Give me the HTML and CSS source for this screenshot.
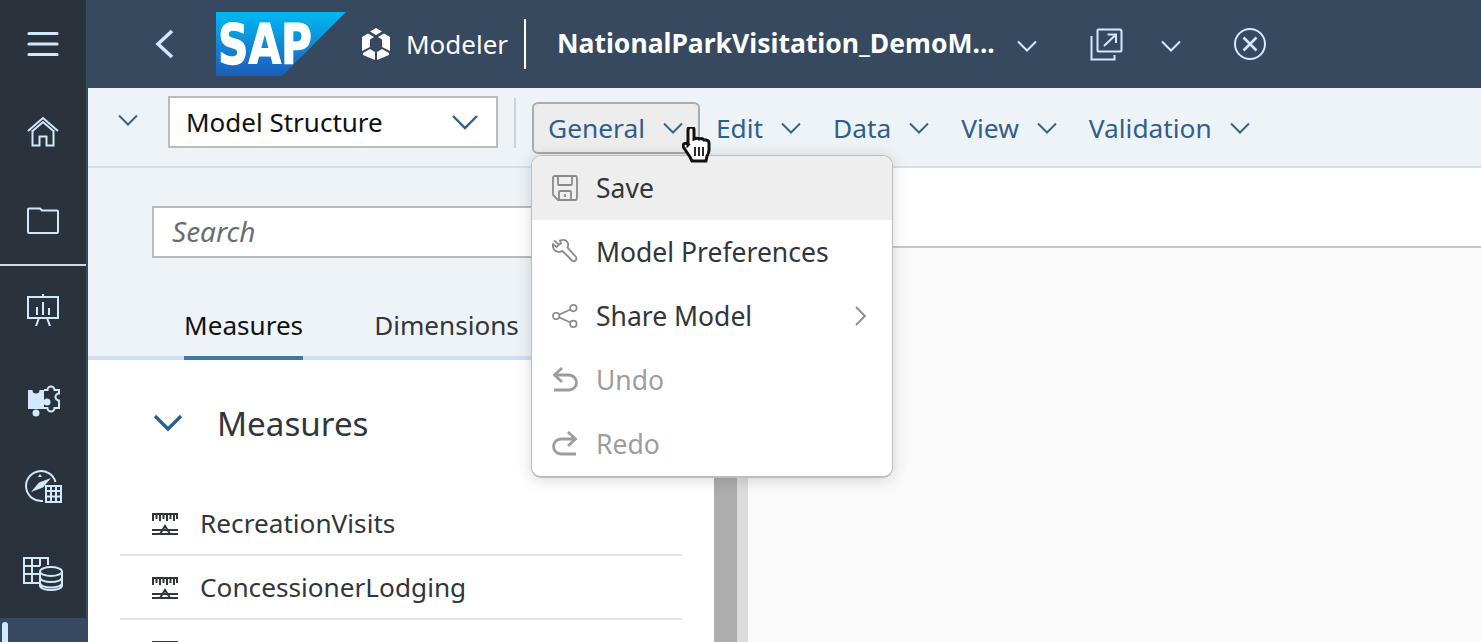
FILE: index.html
```html
<!DOCTYPE html>
<html lang="en">
<head>
    <meta charset="UTF-8">
    <title>Modeler</title>
    <link rel="stylesheet" href="styles.css">
</head>
<body>
    <div class="app">
        <nav class="rail">
            <div class="rail-item">
                <svg class="rail-icon burger" viewBox="0 0 32 32"><path d="M2 5.500h28M2 16h28M2 26.500h28"/></svg>
            </div>
            <div class="rail-item">
                <svg class="rail-icon" viewBox="0 0 32 32"><path d="M1 15 16 2l15 13M5 15.500 16 6l11 9.500M5.500 14v15.500h7V20.500h7v9h7V14"/></svg>
            </div>
            <div class="rail-item">
                <svg class="rail-icon" viewBox="0 0 32 32"><path d="M1 28V5.500q0-1 1-1h11l2 2h15q1 0 1 1V28q0 1-1 1H2q-1 0-1-1z"/></svg>
            </div>
            <div class="rail-line"></div>
            <div class="rail-item">
                <svg class="rail-icon board" viewBox="0 0 38 32"><path d="M19 0v3M4 3h30v21H4zM15 24l-3 8M23 24l3 8M13 21v-8M19 21V8M25 21v-7"/></svg>
            </div>
            <div class="rail-item">
                <svg class="rail-icon puzzle" viewBox="0 0 35 36">
                    <path class="solid" d="M2 8h4.500a3.500 3.500 0 0 0 7 0H18v19H2z"/>
                    <circle class="solid" cx="10" cy="31" r="3.500"/>
                    <circle class="solid" cx="21" cy="20" r="3.500"/>
                    <path d="M18 8h3.500a3.500 3.500 0 1 1 7 0H33v3.500a3.500 3.500 0 0 0 0 7V26h-4.500a3.500 3.500 0 1 1-7 0H18"/>
                </svg>
            </div>
            <div class="rail-item">
                <svg class="rail-icon wide" viewBox="0 0 40 34">
                    <path d="M20 31.900A15 15 0 1 1 32.500 13"/>
                    <path class="solid" d="M8 23l8-9.500L28 9l-8 9.500zM15 8l2-3 2 3z"/>
                    <path d="M23 17h15v16H23zM23 22h15M23 27.500h15M28 17v16M33 17v16"/>
                </svg>
            </div>
            <div class="rail-item">
                <svg class="rail-icon wide" viewBox="0 0 40 34">
                    <path d="M16 26H1V1h24v7M1 9h16M1 17h15M9 1v25M17 1v8"/>
                    <ellipse cx="28" cy="14.500" rx="11" ry="4.500"/>
                    <path d="M17 14.500v14c0 6 22 6 22 0v-14M17 20.500c0 6 22 6 22 0M17 26c0 6 22 6 22 0"/>
                </svg>
            </div>
            <div class="rail-active"><span class="rail-mark"></span></div>
        </nav>

        <div class="main">
            <header class="shell">
                <svg class="shell-back" viewBox="0 0 20 30"><path d="M17 2 3 15l14 13"/></svg>
                <svg class="logo" viewBox="0 0 130 64">
                    <defs>
                        <linearGradient id="logoFill" x1="0" y1="0" x2="0" y2="1">
                            <stop offset="0" stop-color="#00b9f2"/>
                            <stop offset="1" stop-color="#1e5cb8"/>
                        </linearGradient>
                    </defs>
                    <polygon points="0,0 130,0 66,64 0,64" fill="url(#logoFill)"/>
                    <text class="logo-text" x="2" y="51" textLength="94" lengthAdjust="spacingAndGlyphs">SAP</text>
                </svg>
                <svg class="app-icon" viewBox="0 0 28 32">
                    <path d="M14 0l6 3.500-6 3.500-6-3.500zM0 9l6-3.500L12 9l-4 2.500V19l-8 4zM28 9l-6-3.500L16 9l4 2.500V19l8 4zM1 25l7-4 5 3v8L1 27zM27 25l-7-4-5 3v8l12-5z"/>
                </svg>
                <span class="app-name">Modeler</span>
                <span class="shell-line"></span>
                <span class="doc-title">NationalParkVisitation_DemoM...</span>
                <svg class="chev shell-chev first" viewBox="0 0 20 12"><path d="M1 1.500l9 9 9-9"/></svg>
                <svg class="shell-open" viewBox="0 0 33 33">
                    <path d="M8.500 1.500h21q2 0 2 2v19q0 1-1 1h-22q-1 0-1-1v-20q0-1 1-1zM14 18 26 6.500M17.500 6.500H26v8.500"/>
                    <path d="M1.500 8v23.500h23V27"/>
                </svg>
                <svg class="chev shell-chev second" viewBox="0 0 20 12"><path d="M1 1.500l9 9 9-9"/></svg>
                <svg class="shell-close" viewBox="0 0 32 32"><circle cx="16" cy="16" r="15"/><path class="close-x" d="M9.500 9.500l13 13M22.500 9.500l-13 13"/></svg>
            </header>

            <div class="toolbar">
                <svg class="chev tool-chev collapse" viewBox="0 0 20 12"><path d="M1 1.500l9 9 9-9"/></svg>
                <div class="select">
                    <span>Model Structure</span>
                    <svg class="chev select-chev" viewBox="0 0 26 16"><path d="M1 2l12 12L25 2"/></svg>
                </div>
                <span class="tool-line"></span>
                <button class="tool-btn hover">General<svg class="chev tool-chev" viewBox="0 0 20 12"><path d="M1 1.500l9 9 9-9"/></svg></button>
                <button class="tool-btn">Edit<svg class="chev tool-chev" viewBox="0 0 20 12"><path d="M1 1.500l9 9 9-9"/></svg></button>
                <button class="tool-btn">Data<svg class="chev tool-chev" viewBox="0 0 20 12"><path d="M1 1.500l9 9 9-9"/></svg></button>
                <button class="tool-btn">View<svg class="chev tool-chev" viewBox="0 0 20 12"><path d="M1 1.500l9 9 9-9"/></svg></button>
                <button class="tool-btn">Validation<svg class="chev tool-chev" viewBox="0 0 20 12"><path d="M1 1.500l9 9 9-9"/></svg></button>
            </div>

            <div class="workspace">
                <aside class="panel">
                    <div class="panel-top">
                        <div class="search">Search</div>
                        <div class="tabs">
                            <span class="tab active">Measures</span>
                            <span class="tab">Dimensions</span>
                        </div>
                    </div>
                    <div class="panel-list">
                        <div class="section">
                            <svg class="chev section-chev" viewBox="0 0 30 18"><path d="M2 2l13 13L28 2"/></svg>
                            <span>Measures</span>
                        </div>
                        <div class="measure">
                            <svg class="measure-icon" viewBox="0 0 26 22"><path d="M0 1h26M1 1v7M4.500 1v5M8 1v7M11.500 1v5M15 1v7M18.500 1v5M22 1v7M25 1v5M0 17h26M0 21h26M13 13l-5 8h10z"/></svg>
                            <span>RecreationVisits</span>
                        </div>
                        <div class="measure">
                            <svg class="measure-icon" viewBox="0 0 26 22"><path d="M0 1h26M1 1v7M4.500 1v5M8 1v7M11.500 1v5M15 1v7M18.500 1v5M22 1v7M25 1v5M0 17h26M0 21h26M13 13l-5 8h10z"/></svg>
                            <span>ConcessionerLodging</span>
                        </div>
                        <div class="measure">
                            <svg class="measure-icon" viewBox="0 0 26 22"><path d="M0 1h26M1 1v7M4.500 1v5M8 1v7M11.500 1v5M15 1v7M18.500 1v5M22 1v7M25 1v5M0 17h26M0 21h26M13 13l-5 8h10z"/></svg>
                            <span>ConcessionerCamping</span>
                        </div>
                    </div>
                </aside>
                <div class="scroll"><span class="scroll-thumb"></span><span class="scroll-track"></span></div>
                <section class="canvas">
                    <div class="canvas-head"></div>
                    <div class="canvas-body"></div>
                </section>
            </div>
        </div>
    </div>

    <div class="menu">
        <div class="menu-row hover">
            <svg class="menu-icon" viewBox="0 0 26 26"><path d="M1 3q0-2 2-2h20q2 0 2 2v20q0 2-2 2H6l-5-5zM6 1v8q0 1 1 1h12q1 0 1-1V1M7 25v-8q0-1 1-1h10q1 0 1 1v8M13 19v3"/></svg>
            <span>Save</span>
        </div>
        <div class="menu-row">
            <svg class="menu-icon" viewBox="0 0 26 26"><path d="M2 1.500l5 4 2-1-1-3q6-2 8 3 .5 2-.5 4l8.500 9.500q1 2-.5 3.500t-3.500 0L10.500 12q-4 2-7.500-.5Q0 8 1 5l3.500 3L7 5.500"/></svg>
            <span>Model Preferences</span>
        </div>
        <div class="menu-row">
            <svg class="menu-icon" viewBox="0 0 28 26"><circle cx="4.500" cy="13" r="3.500"/><circle cx="23" cy="4.500" r="3.500"/><circle cx="23" cy="21.500" r="3.500"/><path d="M8 11.500 20 6M8 14.500 20 20"/></svg>
            <span>Share Model</span>
            <svg class="menu-arrow" viewBox="0 0 12 20"><path d="M2 1l9 9-9 9"/></svg>
        </div>
        <div class="menu-row off">
            <svg class="menu-icon" viewBox="0 0 26 26"><path d="M10 1 2.500 8l7.500 7M2.500 8H17a7.500 7.500 0 0 1 0 15H2"/></svg>
            <span>Undo</span>
        </div>
        <div class="menu-row off">
            <svg class="menu-icon" viewBox="0 0 26 26"><path d="M16 1l7.500 7-7.500 7M23.500 8H9a7.500 7.500 0 0 0 0 15h15"/></svg>
            <span>Redo</span>
        </div>
    </div>

    <svg class="pointer" viewBox="0 0 30 36">
        <path d="M6 3q0-3 3-3t3 3v9l2-.5q2-.5 3 .5l2-.5q2 0 3 1.500l2 0q3 .5 3 3v7q0 3-2 6l-1 5H10l-2-4-6-9q-2-3 .5-4.500 2-1 4 1L6 18z"/>
        <path class="pointer-lines" d="M13 20v9M17 20v9M21 20v9"/>
    </svg>
</body>
</html>
```

FILE: styles.css
```css
* {
    box-sizing: border-box;
}
html, body {
    margin: 0;
    height: 100%;
    overflow: hidden;
}
body {
    font-family: 'Noto Sans', Arial, sans-serif;
    font-size: 26.5px;
    color: #32363a;
    background: #fff;
}
svg {
    display: block;
    flex: none;
    fill: none;
}
.app {
    display: flex;
    height: 642px;
    overflow: hidden;
}

/* side rail */
.rail {
    width: 88px;
    flex: none;
    background: #2a323b;
    border-right: 2px solid #36495f;
    display: flex;
    flex-direction: column;
}
.rail-item {
    height: 88px;
    flex: none;
    display: flex;
    align-items: center;
    justify-content: center;
}
.rail-icon {
    width: 32px;
    height: 32px;
    stroke: #d1e8ff;
    stroke-width: 2;
}
.rail-icon.burger {
    stroke-width: 3.200;
    stroke-linecap: round;
}
.rail-icon.board {
    width: 38px;
}
.rail-icon.puzzle {
    width: 35px;
    height: 36px;
    margin-top: 4px;
}
.rail-icon.wide {
    width: 40px;
    height: 34px;
}
.rail-icon .solid {
    fill: #d1e8ff;
    stroke: none;
}
.rail-line {
    height: 2px;
    flex: none;
    background: #d9d9d9;
}
.rail-active {
    flex: 1;
    background: #36495f;
    padding: 4px 0 0 2px;
}
.rail-mark {
    display: block;
    width: 6px;
    height: 40px;
    border-radius: 3px;
    background: #d1e8ff;
}

/* header */
.main {
    flex: 1;
    min-width: 0;
    display: flex;
    flex-direction: column;
}
.shell {
    height: 88px;
    flex: none;
    background: #36495f;
    display: flex;
    align-items: center;
    padding-left: 67px;
    color: #fff;
}
.shell-back {
    width: 20px;
    height: 30px;
    stroke: #d1e8ff;
    stroke-width: 3.500;
}
.logo {
    width: 130px;
    height: 64px;
    margin-left: 41px;
}
.logo-text {
    font-family: 'DejaVu Sans', Arial, sans-serif;
    font-size: 55px;
    font-weight: bold;
    fill: #fff;
    stroke: #fff;
    stroke-width: 1.200;
}
.app-icon {
    width: 28px;
    height: 32px;
    margin-left: 16px;
    fill: #fff;
}
.app-name {
    margin-left: 16px;
    width: 102px;
    white-space: nowrap;
    font-size: 26px;
}
.shell-line {
    width: 2px;
    height: 50px;
    margin-left: 16px;
    background: #fff;
}
.doc-title {
    margin: 0 0 3px 31px;
    width: 439px;
    white-space: nowrap;
    font-weight: 700;
}
.chev {
    stroke: #d1e8ff;
    stroke-width: 2;
}
.shell-chev {
    width: 20px;
    height: 12px;
    margin-top: 4px;
}
.shell-chev.first {
    margin-left: 21px;
}
.shell-open {
    width: 33px;
    height: 33px;
    margin-left: 53px;
    stroke: #d1e8ff;
    stroke-width: 2;
}
.shell-chev.second {
    margin-left: 38px;
}
.shell-close {
    width: 32px;
    height: 32px;
    margin-left: 53px;
    stroke: #d1e8ff;
    stroke-width: 2;
}
.close-x {
    stroke-width: 2.600;
}

/* toolbar */
.toolbar {
    height: 80px;
    flex: none;
    background: #eef3f8;
    border-bottom: 2px solid #d2e0ef;
    display: flex;
    align-items: flex-start;
    padding-left: 30px;
}
.tool-chev {
    width: 20px;
    height: 12px;
    stroke: #36648f;
}
.tool-chev.collapse {
    margin-top: 26px;
}
.select {
    width: 330px;
    height: 52px;
    margin: 8px 0 0 30px;
    padding: 0 18px 0 16px;
    background: #fff;
    border: 2px solid #bbbbbb;
    display: flex;
    align-items: center;
    justify-content: space-between;
    font-size: 26px;
    color: #111;
}
.select-chev {
    width: 26px;
    height: 16px;
    stroke: #2f5f8c;
    stroke-width: 2.400;
}
.tool-line {
    width: 2px;
    height: 50px;
    margin: 10px 16px 0 16px;
    background: #cdd3d9;
}
.tool-btn {
    height: 52px;
    margin: 14px 0 0 0;
    padding: 0 14px;
    display: flex;
    align-items: center;
    gap: 18px;
    font: inherit;
    font-size: 26.300px;
    color: #2f5f8c;
    background: none;
    border: 2px solid transparent;
    border-radius: 6px;
}
.tool-btn.hover {
    width: 168px;
    background: #ededed;
    border-color: #ababab;
}

/* left panel */
.workspace {
    flex: 1;
    min-height: 0;
    display: flex;
}
.panel {
    width: 626px;
    flex: none;
    display: flex;
    flex-direction: column;
}
.panel-top {
    height: 192px;
    flex: none;
    background: #eef3f8;
    border-bottom: 4px solid #cfdfee;
    padding: 38px 0 0 64px;
}
.search {
    height: 52px;
    padding: 0 0 2px 18px;
    display: flex;
    align-items: center;
    background: #fff;
    border: 2px solid #bbbbbb;
    border-right: none;
    font-size: 28px;
    font-style: italic;
    color: #6a6d70;
}
.tabs {
    display: flex;
    gap: 71px;
    margin: 42px 0 0 32px;
    font-size: 26.100px;
}
.tab {
    height: 60px;
    line-height: 50px;
    color: #32363a;
}
.tab.active {
    color: #111;
    border-bottom: 4px solid #3f77a8;
}
.panel-list {
    flex: 1;
    padding: 0 32px;
    background: #fff;
}
.section {
    height: 132px;
    display: flex;
    align-items: center;
    gap: 34px;
    padding: 0 0 6px 33px;
    font-size: 33.200px;
}
.section-chev {
    width: 30px;
    height: 18px;
    stroke: #2f5f8c;
    stroke-width: 3.400;
}
.measure {
    height: 64px;
    display: flex;
    align-items: center;
    gap: 22px;
    padding-left: 32px;
    border-bottom: 2px solid #e5e5e5;
    font-size: 26.200px;
}
.measure-icon {
    width: 26px;
    height: 22px;
    margin-top: 2px;
    stroke: #32363a;
    stroke-width: 2;
}
.scroll {
    width: 34px;
    flex: none;
    display: flex;
}
.scroll-thumb {
    width: 23px;
    background: #adadad;
}
.scroll-track {
    width: 11px;
    background: #dcdcdc;
}
.canvas {
    flex: 1;
    min-width: 0;
    display: flex;
    flex-direction: column;
}
.canvas-head {
    height: 80px;
    flex: none;
    background: #fff;
    border-bottom: 2px solid #c8c8c8;
}
.canvas-body {
    flex: 1;
    background: #fafafa;
}

/* open menu, lies over the page */
.menu {
    position: absolute;
    left: 531px;
    top: 155px;
    width: 362px;
    background: #fff;
    border: 1px solid #bdbdbd;
    border-bottom-width: 2px;
    border-radius: 10px;
    box-shadow: 0 2px 16px rgba(0, 0, 0, 0.16);
    overflow: hidden;
}
.menu-row {
    height: 64px;
    display: flex;
    align-items: center;
    padding-left: 20px;
    padding-bottom: 1px;
    color: #32363a;
}
.menu-row.hover {
    background: #eeeeee;
}
.menu-row.off {
    color: #9d9d9d;
}
.menu-icon {
    width: 26px;
    height: 26px;
    margin-right: 18px;
    stroke: #8a8a8a;
    stroke-width: 1.800;
}
.menu-row.off .menu-icon {
    stroke: #9d9d9d;
    stroke-width: 2.800;
}
.menu-arrow {
    width: 12px;
    height: 20px;
    margin-left: auto;
    margin-right: 26px;
    stroke: #8a8a8a;
    stroke-width: 1.800;
}
.pointer {
    position: absolute;
    left: 682px;
    top: 127px;
    width: 30px;
    height: 36px;
    fill: #fff;
    stroke: #111;
    stroke-width: 3;
}
.pointer-lines {
    stroke-width: 1.800;
}
```
